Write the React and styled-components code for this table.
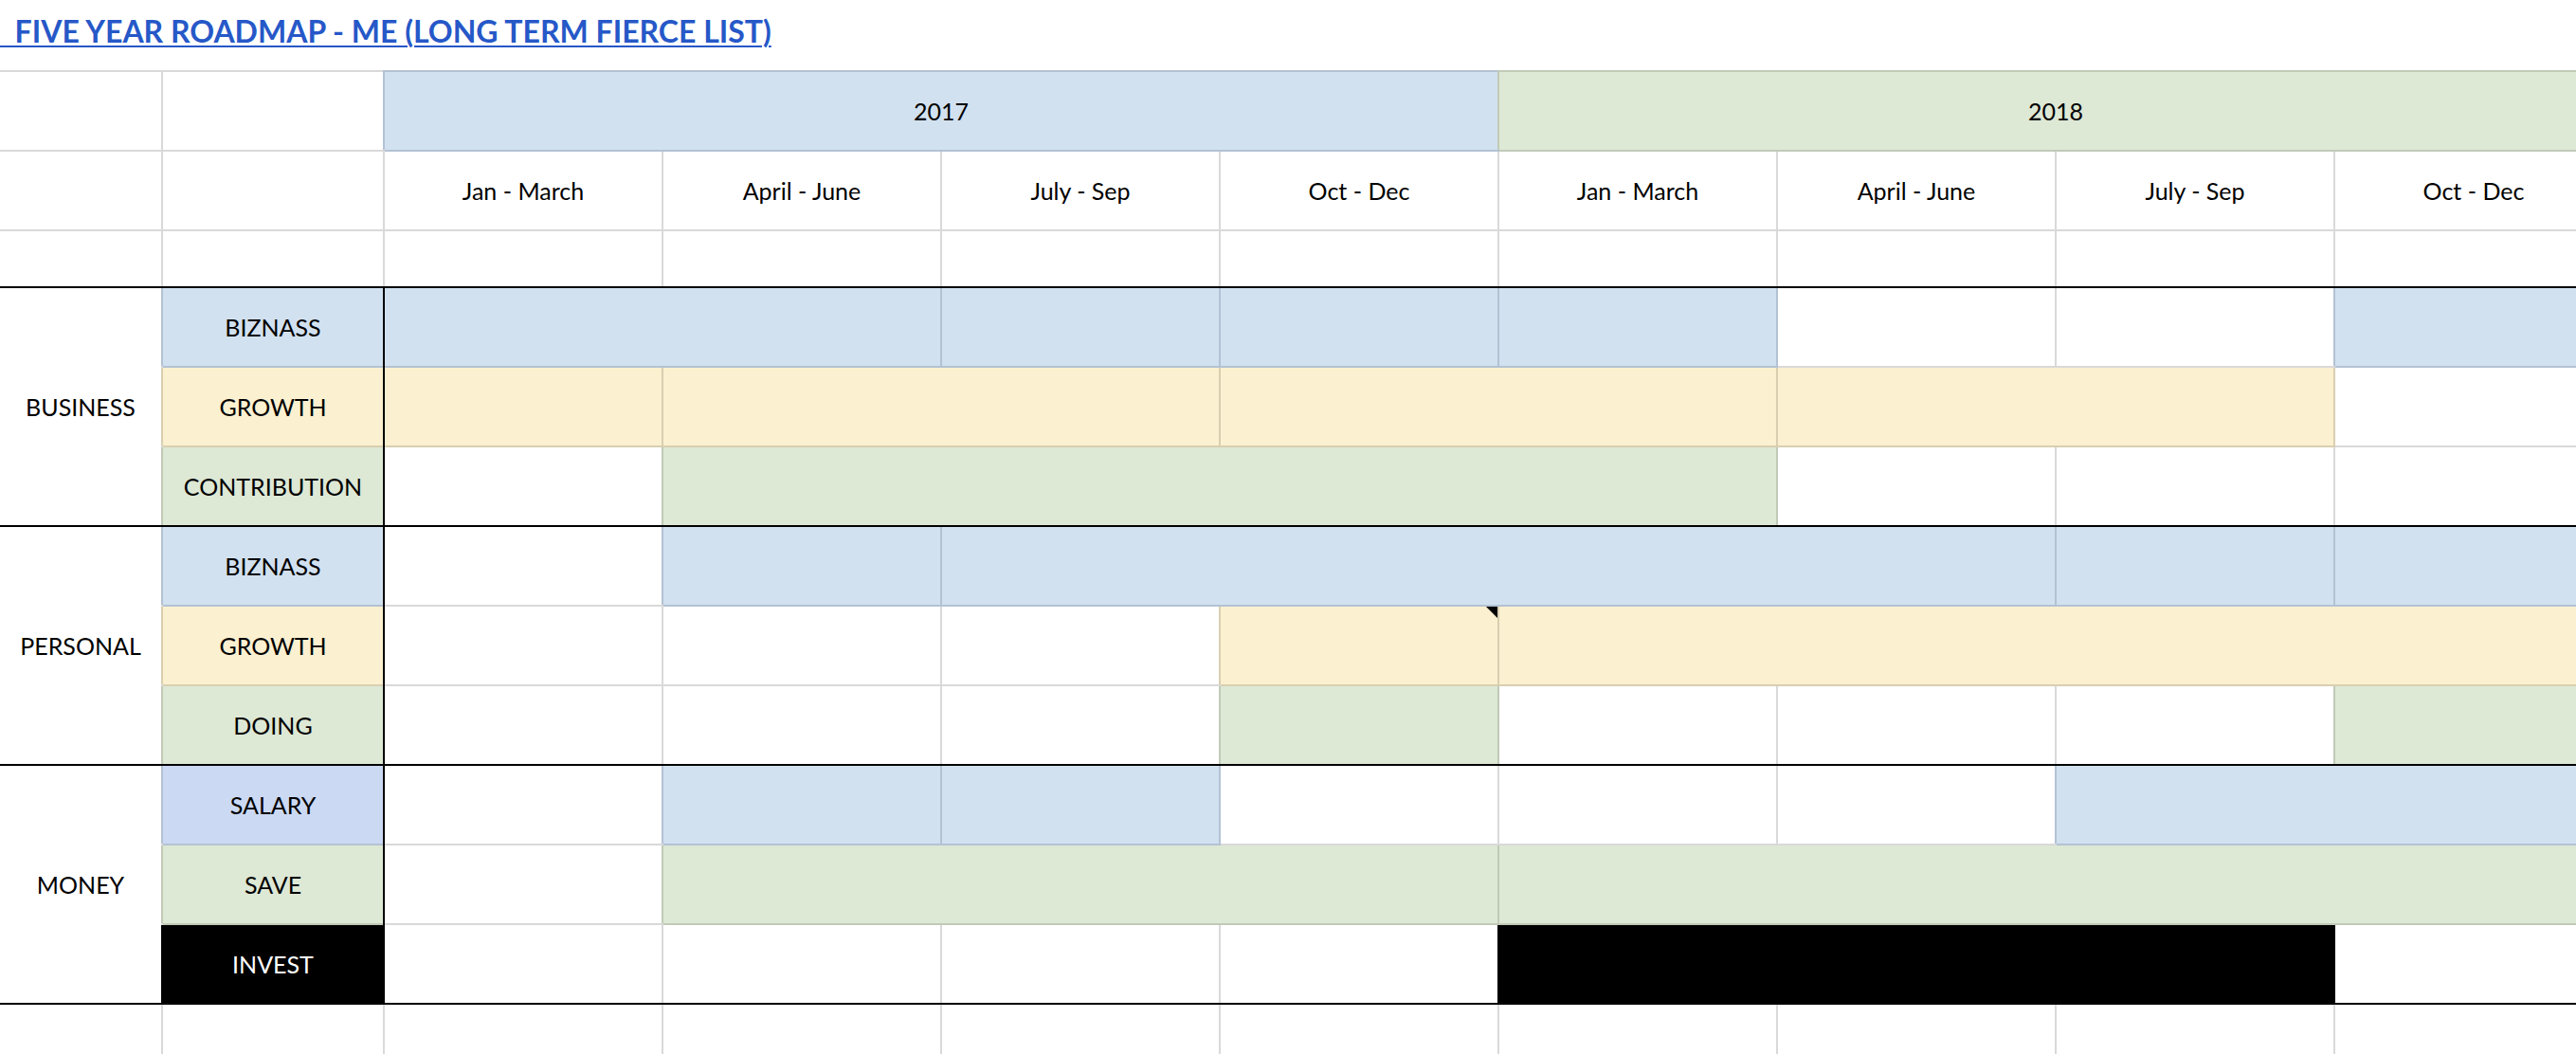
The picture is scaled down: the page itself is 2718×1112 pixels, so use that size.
import React from "react";
import styled, { createGlobalStyle, css } from "styled-components";

const GlobalStyle = createGlobalStyle`
  html, body {
    margin: 0;
    padding: 0;
    background: #fff;
    overflow: hidden;
  }
  body {
    font-family: Lato, "Liberation Sans", sans-serif;
    color: #000;
  }
`;

const fills = {
  white: { bg: "#ffffff", line: "#d9d9d9" },
  blue: { bg: "#d2e1f0", line: "#b3c2d3" },
  yellow: { bg: "#fbf0d0", line: "#d9cfb0" },
  green: { bg: "#dde8d5", line: "#c0cab7" },
  salary: { bg: "#cbd9f3", line: "#b3c2d3" },
  black: { bg: "#000000", line: "#000000" },
};

const BLACK = "#000000";

// spreadsheet grid lines drawn as shadows so a filled cell can paint over its neighbour's line
const shadows = (p) => {
  const line = fills[p.$fill].line;
  const right = p.$right || line;
  const bottom = p.$bottom || line;
  const list = [
    { c: right, s: `inset -2px 0 0 0 ${right}` },
    { c: bottom, s: `inset 0 -2px 0 0 ${bottom}` },
  ];
  if (p.$top) list.push({ c: line, s: `inset 0 2px 0 0 ${line}` });
  if (p.$lead) list.push({ c: line, s: `-3px -1px 0 -1px ${line}` });
  list.sort((a, b) => (a.c === BLACK ? 0 : 1) - (b.c === BLACK ? 0 : 1));
  return list.map((x) => x.s).join(", ");
};

const Page = styled.div`
  width: 2758px;
`;

const TitleBar = styled.div`
  height: 74px;
  box-sizing: border-box;
  padding-top: 17px;
`;

const Title = styled.span`
  white-space: pre;
  font-size: 32px;
  line-height: 32px;
  font-weight: 700;
  color: #2658c8;
  text-decoration: underline;
  text-decoration-thickness: 2px;
  text-underline-offset: 3px;
`;

const Sheet = styled.div`
  display: grid;
  grid-template-columns: 172px 234px repeat(8, 294px);
  grid-template-rows: 86px 84px 60px repeat(10, 84px);
`;

const Cell = styled.div`
  position: relative;
  box-sizing: border-box;
  display: flex;
  align-items: center;
  justify-content: center;
  padding: ${(p) => (p.$top ? "2px" : "0")} 2px 2px 0;
  grid-column: span ${(p) => p.$span || 1};
  grid-row: span ${(p) => p.$rows || 1};
  background: ${(p) => fills[p.$fill].bg};
  color: ${(p) => (p.$fill === "black" ? "#fff" : "#000")};
  font-size: 25px;
  white-space: nowrap;
  box-shadow: ${shadows};

  ${(p) =>
    p.$note &&
    css`
      &::after {
        content: "";
        position: absolute;
        top: 0;
        right: 2px;
        width: 0;
        height: 0;
        border-top: 12px solid #000;
        border-left: 12px solid transparent;
      }
    `}
`;

const quarters = ["Jan - March", "April - June", "July - Sep", "Oct - Dec"];

const sections = [
  {
    name: "BUSINESS",
    rows: [
      { label: "BIZNASS", fill: "blue", cells: [[2, "blue"], [1, "blue"], [1, "blue"], [1, "blue"], [1], [1], [1, "blue"]] },
      { label: "GROWTH", fill: "yellow", cells: [[1, "yellow"], [2, "yellow"], [2, "yellow"], [2, "yellow"], [1]] },
      { label: "CONTRIBUTION", fill: "green", cells: [[1], [4, "green"], [1], [1], [1]] },
    ],
  },
  {
    name: "PERSONAL",
    rows: [
      { label: "BIZNASS", fill: "blue", cells: [[1], [1, "blue"], [4, "blue"], [1, "blue"], [1, "blue"]] },
      { label: "GROWTH", fill: "yellow", cells: [[1], [1], [1], [1, "yellow", true], [4, "yellow"]] },
      { label: "DOING", fill: "green", cells: [[1], [1], [1], [1, "green"], [1], [1], [1], [1, "green"]] },
    ],
  },
  {
    name: "MONEY",
    rows: [
      { label: "SALARY", fill: "salary", cells: [[1], [1, "blue"], [1, "blue"], [1], [1], [1], [2, "blue"]] },
      { label: "SAVE", fill: "green", cells: [[1], [3, "green"], [4, "green"]] },
      { label: "INVEST", fill: "black", cells: [[1], [1], [1], [1], [3, "black"], [1]] },
    ],
  },
];

const blanks = (n, props = {}) =>
  Array.from({ length: n }, (_, i) => <Cell key={i} $fill="white" {...props} />);

const SectionRows = ({ section }) => (
  <>
    <Cell $fill="white" $rows={3} $bottom={BLACK}>
      {section.name}
    </Cell>
    {section.rows.map((row, r) => {
      const last = r === section.rows.length - 1;
      const bottom = last ? BLACK : undefined;
      let col = 0;
      return (
        <React.Fragment key={r}>
          <Cell $fill={row.fill} $lead $right={BLACK} $bottom={bottom}>
            {row.label}
          </Cell>
          {row.cells.map(([span, fill = "white", note], i) => {
            const cell = (
              <Cell
                key={i}
                $span={span}
                $fill={fill}
                $lead={fill !== "white" && col > 0}
                $bottom={bottom}
                $note={note}
              />
            );
            col += span;
            return cell;
          })}
        </React.Fragment>
      );
    })}
  </>
);

const App = () => (
  <Page>
    <GlobalStyle />
    <TitleBar>
      <Title>{"  FIVE YEAR ROADMAP - ME (LONG TERM FIERCE LIST)"}</Title>
    </TitleBar>
    <Sheet>
      <Cell $fill="white" $top />
      <Cell $fill="white" $top />
      <Cell $fill="blue" $span={4} $top $lead>
        2017
      </Cell>
      <Cell $fill="green" $span={4} $top $lead>
        2018
      </Cell>

      {blanks(2)}
      {[...quarters, ...quarters].map((q, i) => (
        <Cell key={i} $fill="white">
          {q}
        </Cell>
      ))}

      {blanks(10, { $bottom: BLACK })}

      {sections.map((s) => (
        <SectionRows key={s.name} section={s} />
      ))}

      {blanks(10)}
    </Sheet>
  </Page>
);

export default App;
